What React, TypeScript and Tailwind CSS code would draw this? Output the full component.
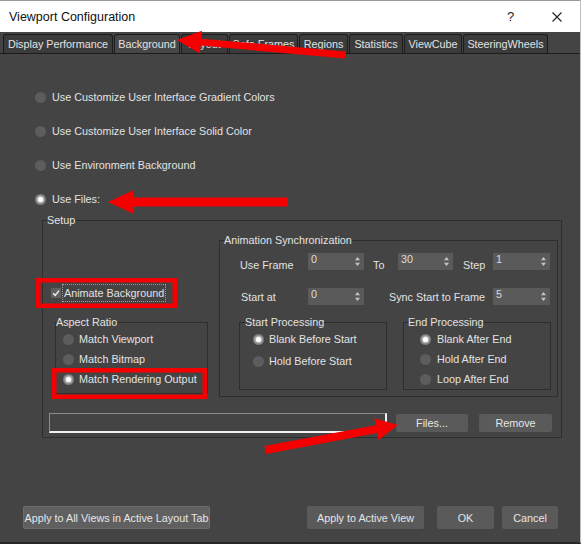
import React from "react";

const Radio = ({ on }: { on?: boolean }) => (
  <span
    className={
      on
        ? "w-[11px] h-[11px] rounded-full shrink-0 flex items-center justify-center bg-[#7a7a7a]"
        : "w-[11px] h-[11px] rounded-full shrink-0 bg-[#5d5d5d]"
    }
  >
    {on && (
      <span className="w-[5px] h-[5px] rounded-full bg-white shadow-[0_0_2px_1px_rgba(255,255,255,0.7)]" />
    )}
  </span>
);

const Spinner = ({ v, w }: { v: string; w: string }) => (
  <div className={`relative h-[17px] bg-[#5a5a5a] text-[#dcdcdc] leading-[12px] pl-[3px] shrink-0 ${w}`}>
    {v}
    <svg className="absolute right-[4px] top-[4px]" width="5" height="9" viewBox="0 0 5 9">
      <path d="M2.5 0L5 3.2H0z M0 5.8h5L2.5 9z" fill="#c4c4c4" />
    </svg>
  </div>
);

const Btn = ({ children, w, cls = "" }: { children: React.ReactNode; w: string; cls?: string }) => (
  <div
    className={`h-[18px] bg-[#5a5a5a] rounded-[2px] text-[#e6e6e6] flex items-center justify-center shrink-0 ${w} ${cls}`}
  >
    {children}
  </div>
);

const tabs = [
  { t: "Display Performance", w: "w-[110px]" },
  { t: "Background", w: "w-[66px]", on: true },
  { t: "Layout", w: "w-[47px]" },
  { t: "Safe Frames", w: "w-[69px]" },
  { t: "Regions", w: "w-[49px]" },
  { t: "Statistics", w: "w-[54px]" },
  { t: "ViewCube", w: "w-[58px]" },
  { t: "SteeringWheels", w: "w-[85px]" },
];

export default function App() {
  return (
    <div className="w-[581px] h-[544px] bg-[#444444] relative overflow-hidden font-['Liberation_Sans',Arial,sans-serif] text-[10.8px] leading-[14px] text-[#e2e2e2] border-r border-r-[#bdbdbd] border-b-[2px] border-b-[#262626]">
      {/* title bar */}
      <div className="h-[32px] bg-white flex items-center border-t border-t-[#9a9a9a]">
        <span className="ml-[9px] text-[12.5px] text-[#111]">Viewport Configuration</span>
        <span className="flex-1" />
        <span className="text-[13px] text-[#222] w-[8px]">?</span>
        <svg className="ml-[37px] mr-[18px]" width="10" height="10" viewBox="0 0 10 10">
          <path d="M0.5 0.5L9.5 9.5M9.5 0.5L0.5 9.5" stroke="#222" strokeWidth="1.1" />
        </svg>
      </div>

      {/* tabs */}
      <div className="mt-[2px] h-[20px] flex gap-[1px] pl-[3px] border-b border-b-[#1c1c1c]">
        {tabs.map((t) => (
          <div
            key={t.t}
            className={`${t.w} h-[19px] border border-b-0 border-[#1c1c1c] rounded-t-[3px] flex items-center justify-center ${
              t.on ? "bg-[#474747]" : "bg-[#3b3b3b]"
            }`}
          >
            {t.t}
          </div>
        ))}
      </div>

      {/* background options */}
      <div className="pt-[26px]">
        {[
          "Use Customize User Interface Gradient Colors",
          "Use Customize User Interface Solid Color",
          "Use Environment Background",
          "Use Files:",
        ].map((l, i) => (
          <div key={l} className="h-[34px] flex items-center pl-[35px] gap-[6px]">
            <Radio on={i === 3} />
            <span>{l}</span>
          </div>
        ))}
      </div>

      {/* setup */}
      <fieldset className="ml-[42px] w-[520px] mt-[-3px] border border-[#2e2e2e]">
        <legend className="ml-[3px] px-[1px]">Setup</legend>
        <div className="flex items-start">
          <div className="w-[176px] shrink-0">
            <div className="mt-[57px] h-[18px] flex items-center ml-[8px]">
              <svg width="10" height="10" viewBox="0 0 10 10">
                <rect width="10" height="10" fill="#5f5f5f" />
                <path d="M2 5.2L4.2 7.4L8 2.6" stroke="#eeeeee" strokeWidth="1.5" fill="none" />
              </svg>
              <span className="ml-[1px] h-[18px] flex items-center px-[1px] border border-dotted border-[#9a9a9a]">
                Animate Background
              </span>
            </div>
            <fieldset className="mt-[13px] ml-[12px] w-[153px] border border-[#2e2e2e] pb-[4px]">
              <legend className="px-0">Aspect Ratio</legend>
              {["Match Viewport", "Match Bitmap", "Match Rendering Output"].map((l, i) => (
                <div key={l} className="h-[20px] flex items-center pl-[7px] gap-[5px]">
                  <Radio on={i === 2} />
                  <span>{l}</span>
                </div>
              ))}
            </fieldset>
          </div>

          <fieldset className="mt-[6px] w-[339px] border border-[#2e2e2e] pb-[6px]">
            <legend className="ml-[4px] px-0">Animation Synchronization</legend>
            <div className="mt-[6px] h-[17px] flex items-start pl-[20px]">
              <span className="w-[68px] pt-[5px] shrink-0">Use Frame</span>
              <Spinner v="0" w="w-[56px]" />
              <span className="ml-[9px] w-[25px] pt-[5px] shrink-0">To</span>
              <Spinner v="30" w="w-[55px]" />
              <span className="ml-[10px] w-[30px] pt-[5px] shrink-0">Step</span>
              <Spinner v="1" w="w-[57px]" />
            </div>
            <div className="mt-[18px] h-[17px] flex items-start pl-[21px]">
              <span className="w-[67px] pt-[2px] shrink-0">Start at</span>
              <Spinner v="0" w="w-[56px]" />
              <span className="ml-[25px] w-[104px] pt-[2px] shrink-0">Sync Start to Frame</span>
              <Spinner v="5" w="w-[57px]" />
            </div>
            <div className="mt-[10px] flex items-start">
              <fieldset className="ml-[19px] w-[148px] border border-[#2e2e2e] pb-[18px]">
                <legend className="ml-[5px] px-0">Start Processing</legend>
                <div className="h-[20px] flex items-center pl-[13px] gap-[5px]">
                  <Radio on />
                  <span>Blank Before Start</span>
                </div>
                <div className="mt-[2px] h-[20px] flex items-center pl-[13px] gap-[5px]">
                  <Radio />
                  <span>Hold Before Start</span>
                </div>
              </fieldset>
              <fieldset className="ml-[16px] w-[148px] border border-[#2e2e2e]">
                <legend className="ml-[4px] px-0">End Processing</legend>
                {["Blank After End", "Hold After End", "Loop After End"].map((l, i) => (
                  <div key={l} className="h-[20px] flex items-center pl-[16px] gap-[6px]">
                    <Radio on={i === 0} />
                    <span>{l}</span>
                  </div>
                ))}
              </fieldset>
            </div>
          </fieldset>
        </div>

        <div className="mt-[16px] pb-[4px] flex items-center">
          <div className="ml-[6px] w-[338px] h-[20px] bg-[#444444] border-t border-l border-t-[#8c8c8c] border-l-[#8c8c8c] border-r-2 border-b-2 border-r-[#f2f2f2] border-b-[#f2f2f2]" />
          <Btn w="w-[72px]" cls="ml-[9px]">Files...</Btn>
          <Btn w="w-[73px]" cls="ml-[11px]">Remove</Btn>
        </div>
      </fieldset>

      {/* bottom buttons */}
      <div className="mt-[68px] flex">
        <Btn w="w-[187px]" cls="ml-[23px] h-[23px] bg-[#606060] border border-[#6c6c6c]">
          Apply to All Views in Active Layout Tab
        </Btn>
        <Btn w="w-[117px]" cls="ml-[97px] h-[23px]">Apply to Active View</Btn>
        <Btn w="w-[57px]" cls="ml-[13px] h-[23px]">OK</Btn>
        <Btn w="w-[56px]" cls="ml-[8px] h-[23px]">Cancel</Btn>
      </div>

      {/* red annotations */}
      <svg className="absolute inset-0 pointer-events-none" width="581" height="544" viewBox="0 0 581 544">
        <g fill="#f50000">
          <polygon
            transform="translate(177 40) rotate(5.1)"
            points="0,0 24,-11.5 24,-3.5 169,-3.5 169,3.5 24,3.5 24,11.5"
          />
          <polygon
            transform="translate(108 202)"
            points="0,0 26,-12 26,-4.5 180,-4.5 180,4.5 26,4.5 26,12"
          />
          <polygon
            transform="translate(398 425) rotate(169.35)"
            points="0,0 22,-11 22,-4 135,-4 135,4 22,4 22,11"
          />
        </g>
        <g fill="none" stroke="#f50000" strokeWidth="4.5">
          <rect x="38.25" y="280.25" width="136.5" height="25.5" />
          <rect x="54.25" y="370.25" width="150.5" height="26.5" />
        </g>
      </svg>
    </div>
  );
}
